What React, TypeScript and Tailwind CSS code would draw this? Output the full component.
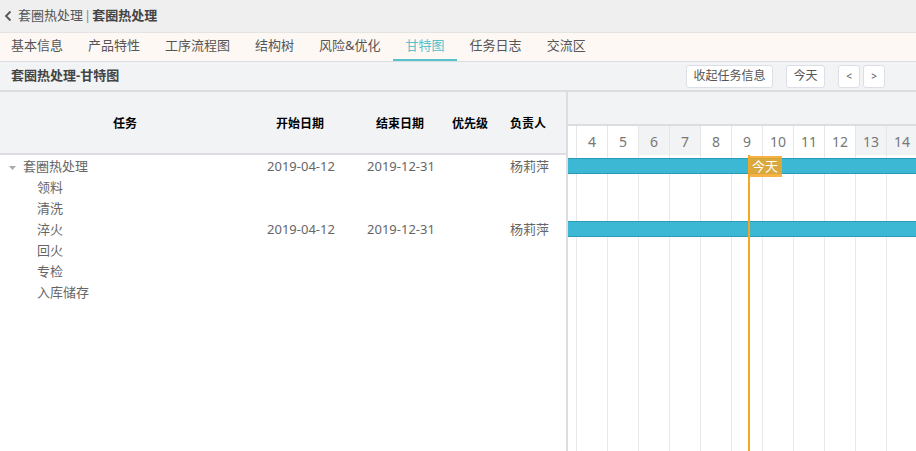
import React from "react";

const tabs = ["基本信息", "产品特性", "工序流程图", "结构树", "风险&优化", "甘特图", "任务日志", "交流区"];
const days = [
  { d: "", w: false, first: true },
  { d: "4", w: false },
  { d: "5", w: false },
  { d: "6", w: true },
  { d: "7", w: true },
  { d: "8", w: false },
  { d: "9", w: false },
  { d: "10", w: false },
  { d: "11", w: false },
  { d: "12", w: false },
  { d: "13", w: true },
  { d: "14", w: true },
];

type Row = { name: string; level: number; start?: string; end?: string; owner?: string; bar?: boolean };
const rows: Row[] = [
  { name: "套圈热处理", level: 0, start: "2019-04-12", end: "2019-12-31", owner: "杨莉萍", bar: true },
  { name: "领料", level: 1 },
  { name: "清洗", level: 1 },
  { name: "淬火", level: 1, start: "2019-04-12", end: "2019-12-31", owner: "杨莉萍", bar: true },
  { name: "回火", level: 1 },
  { name: "专检", level: 1 },
  { name: "入库储存", level: 1 },
];

export default function App() {
  return (
    <div
      className="w-[916px] h-[451px] overflow-hidden bg-white flex flex-col"
      style={{ fontFamily: '"Noto Sans", "Noto Sans CJK SC", sans-serif' }}
    >
      {/* top bar */}
      <div className="h-[32px] shrink-0 bg-[#efefef] flex items-center pl-[4px] text-[13px] text-[#555]">
        <svg width="9" height="12" viewBox="0 0 9 12" className="mr-[5px]">
          <path d="M6.5 1.5 L2 6 L6.5 10.5" fill="none" stroke="#555" strokeWidth="1.8" />
        </svg>
        <span>套圈热处理</span>
        <span className="mx-[1px] text-[#888]">|</span>
        <span className="font-bold text-[#444]">套圈热处理</span>
      </div>

      {/* tabs */}
      <div className="h-[30px] shrink-0 bg-[#fdf8f3] border-t border-[#e4e4e4] border-b border-b-[#dcdde0] flex items-stretch text-[13px] text-[#555]">
        {tabs.map((t, i) => (
          <div
            key={t}
            className={
              "flex items-center border-b-2 " +
              (i === 0 ? "pl-[11px] pr-[12.5px] " : "px-[12.5px] ") +
              (t === "甘特图" ? "border-[#56c2cc] text-[#56c2cc]" : "border-transparent")
            }
          >
            {t}
          </div>
        ))}
      </div>

      {/* toolbar */}
      <div className="h-[28px] shrink-0 bg-[#f2f3f5] flex items-center pl-[11px] pr-[31px]">
        <div className="font-bold text-[13px] text-[#444]">套圈热处理-甘特图</div>
        <div className="ml-auto flex items-center text-[12px] text-[#555]">
          <button className="h-[23px] w-[87px] bg-white border border-[#dcdfe6] rounded-[3px]">收起任务信息</button>
          <button className="h-[23px] w-[39px] ml-[13px] bg-white border border-[#dcdfe6] rounded-[3px]">今天</button>
          <button className="h-[23px] w-[22px] ml-[13px] bg-white border border-[#dcdfe6] rounded-[3px] text-[10px]">&lt;</button>
          <button className="h-[23px] w-[22px] ml-[3px] bg-white border border-[#dcdfe6] rounded-[3px] text-[10px]">&gt;</button>
        </div>
      </div>

      <div className="h-[2px] shrink-0 bg-[#dcdde0]" />

      {/* main */}
      <div className="flex flex-1 min-h-0">
        {/* left grid */}
        <div className="w-[568px] shrink-0 border-r-2 border-[#dcdde0] flex flex-col">
          <div className="h-[63px] shrink-0 bg-[#f2f3f5] border-b-2 border-[#dcdde0] flex items-center pt-[3px] text-[12px] font-bold text-black">
            <div className="w-[250px] text-center">任务</div>
            <div className="w-[100px] text-center">开始日期</div>
            <div className="w-[100px] text-center">结束日期</div>
            <div className="w-[40px] text-center">优先级</div>
            <div className="w-[76px] text-center">负责人</div>
          </div>
          <div className="text-[13px] text-[#666] pt-[1px]">
            {rows.map((r, i) => (
              <div key={i} className="h-[21px] flex items-center">
                <div className="w-[250px] flex items-center">
                  {r.level === 0 ? (
                    <>
                      <svg width="7" height="4" viewBox="0 0 7 4" className="ml-[9px] mr-[7px] mt-[2px]">
                        <path d="M0 0 L7 0 L3.5 4 Z" fill="#aaa" />
                      </svg>
                      <span>{r.name}</span>
                    </>
                  ) : (
                    <span className="pl-[37px]">{r.name}</span>
                  )}
                </div>
                <div className="w-[100px] text-center pl-[2px]">{r.start}</div>
                <div className="w-[100px] text-center pl-[2px]">{r.end}</div>
                <div className="w-[40px]" />
                <div className="w-[76px] text-center pl-[3px]">{r.owner}</div>
              </div>
            ))}
          </div>
        </div>

        {/* right chart */}
        <div className="flex-1 min-w-0 flex flex-col overflow-hidden">
          <div className="h-[34px] shrink-0 bg-[#f2f3f5] border-b-2 border-[#dcdde0]" />
          <div className="h-[29px] shrink-0 flex text-[14px] text-[#777]">
            {days.map((c, i) => (
              <div
                key={i}
                className={
                  "shrink-0 h-full flex items-center justify-center pt-[2px] border-r border-[#e6e6e6] " +
                  (c.first ? "w-[9px] " : "w-[31px] ") +
                  (c.w ? "bg-[#f2f3f5]" : "bg-white")
                }
              >
                {c.d}
              </div>
            ))}
          </div>
          <div className="relative flex-1">
            <div className="absolute inset-0 flex">
              {days.map((c, i) => (
                <div
                  key={i}
                  className={"shrink-0 h-full border-r border-[#e8e8e8] " + (c.first ? "w-[9px]" : "w-[31px]")}
                />
              ))}
            </div>
            <div className="absolute inset-0 flex flex-col">
              {rows.map((r, i) => (
                <div key={i} className="h-[21px] shrink-0 relative">
                  {r.bar && (
                    <div className="absolute left-0 right-0 top-[3px] h-[16px] bg-[#3db8d4] border-y border-[#2a9bb6]" />
                  )}
                </div>
              ))}
            </div>
            <div className="absolute left-[180px] top-0 bottom-0 w-[2px] bg-[#f5a623]" />
            <div className="absolute left-[180px] top-[1px] h-[21px] w-[34px] bg-[#f5a623]/85 text-white text-[13px] flex items-center justify-center">
              今天
            </div>
          </div>
        </div>
      </div>
    </div>
  );
}
